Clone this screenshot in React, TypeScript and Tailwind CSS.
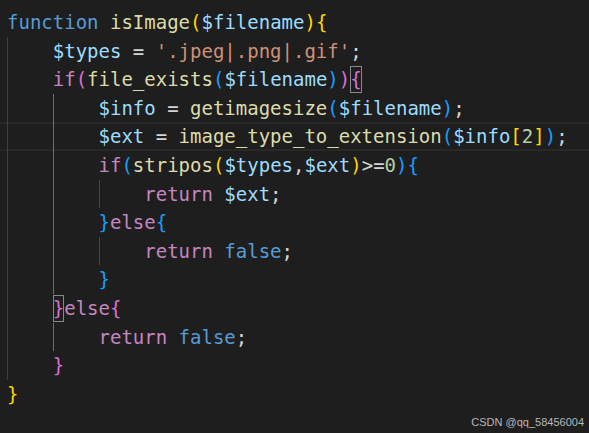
type Tok = [string, string];

const C = {
  kw: "text-[#569cd6]",
  ctrl: "text-[#c586c0]",
  fn: "text-[#dcdcaa]",
  v: "text-[#9cdcfe]",
  str: "text-[#ce9178]",
  num: "text-[#b5cea8]",
  op: "text-[#d4d4d4]",
  b1: "text-[#ffd700]",
  b2: "text-[#da70d6]",
  b3: "text-[#179fff]",
};

type Line = {
  guides: ("dim" | "active" | "deep")[];
  toks: (Tok | [string, string, "box"])[];
  current?: boolean;
};

const lines: Line[] = [
  {
    guides: [],
    toks: [
      ["function", C.kw],
      [" ", C.op],
      ["isImage", C.fn],
      ["(", C.b1],
      ["$filename", C.v],
      [")", C.b1],
      ["{", C.b1],
    ],
  },
  {
    guides: ["dim"],
    toks: [
      ["$types", C.v],
      [" = ", C.op],
      ["'.jpeg|.png|.gif'", C.str],
      [";", C.op],
    ],
  },
  {
    guides: ["dim"],
    toks: [
      ["if", C.ctrl],
      ["(", C.b2],
      ["file_exists", C.fn],
      ["(", C.b3],
      ["$filename", C.v],
      [")", C.b3],
      [")", C.b2],
      ["{", C.b2, "box"],
    ],
  },
  {
    guides: ["dim", "active"],
    toks: [
      ["$info", C.v],
      [" = ", C.op],
      ["getimagesize", C.fn],
      ["(", C.b3],
      ["$filename", C.v],
      [")", C.b3],
      [";", C.op],
    ],
  },
  {
    guides: ["dim", "active"],
    current: true,
    toks: [
      ["$ext", C.v],
      [" = ", C.op],
      ["image_type_to_extension", C.fn],
      ["(", C.b3],
      ["$info", C.v],
      ["[", C.b1],
      ["2", C.num],
      ["]", C.b1],
      [")", C.b3],
      [";", C.op],
    ],
  },
  {
    guides: ["dim", "active"],
    toks: [
      ["if", C.ctrl],
      ["(", C.b3],
      ["stripos", C.fn],
      ["(", C.b1],
      ["$types", C.v],
      [",", C.op],
      ["$ext", C.v],
      [")", C.b1],
      [">=", C.op],
      ["0", C.num],
      [")", C.b3],
      ["{", C.b3],
    ],
  },
  {
    guides: ["dim", "active", "deep"],
    toks: [
      ["return", C.ctrl],
      [" ", C.op],
      ["$ext", C.v],
      [";", C.op],
    ],
  },
  {
    guides: ["dim", "active"],
    toks: [
      ["}", C.b3],
      ["else", C.ctrl],
      ["{", C.b3],
    ],
  },
  {
    guides: ["dim", "active", "deep"],
    toks: [
      ["return", C.ctrl],
      [" ", C.op],
      ["false", C.kw],
      [";", C.op],
    ],
  },
  {
    guides: ["dim", "active"],
    toks: [["}", C.b3]],
  },
  {
    guides: ["dim"],
    toks: [
      ["}", C.b2, "box"],
      ["else", C.ctrl],
      ["{", C.b2],
    ],
  },
  {
    guides: ["dim", "active"],
    toks: [
      ["return", C.ctrl],
      [" ", C.op],
      ["false", C.kw],
      [";", C.op],
    ],
  },
  {
    guides: ["dim"],
    toks: [["}", C.b2]],
  },
  {
    guides: [],
    toks: [["}", C.b1]],
  },
];

function Guide({ kind }: { kind: "dim" | "active" | "deep" }) {
  const color =
    kind === "active"
      ? "border-[#6e6e6e]"
      : kind === "deep"
      ? "border-[#464646]"
      : "border-[#404040]";
  return <span className={`h-full w-[4ch] shrink-0 border-l ${color}`} />;
}

export default function App() {
  return (
    <div className="relative h-[433px] w-[589px] overflow-hidden bg-[#1e1e1e]">
      <div
        className="pt-[8px] text-[19px] whitespace-pre"
        style={{ fontFamily: '"DejaVu Sans Mono", "Liberation Mono", monospace' }}
      >
        {lines.map((line, i) => (
          <div
            key={i}
            className={`flex h-[28.6px] items-stretch pl-[7px] leading-[28.6px] ${
              line.current
                ? "shadow-[inset_0_2px_0_#282828,inset_0_-2px_0_#282828]"
                : ""
            }`}
          >
            {line.guides.map((g, j) => (
              <Guide key={j} kind={g} />
            ))}
            <span>
              {line.toks.map((t, k) =>
                t[2] === "box" ? (
                  <span
                    key={k}
                    className={`inline-block h-[27px] leading-[27px] align-top mt-[1px] shadow-[inset_0_0_0_1px_#888888] ${t[1]}`}
                  >
                    {t[0]}
                  </span>
                ) : (
                  <span key={k} className={t[1]}>
                    {t[0]}
                  </span>
                )
              )}
            </span>
          </div>
        ))}
      </div>
      <div
        className="absolute right-[5px] bottom-[3px] text-[11px] text-[#b8b8b8]"
        style={{ fontFamily: '"Liberation Sans", Arial, sans-serif' }}
      >
        CSDN @qq_58456004
      </div>
    </div>
  );
}
